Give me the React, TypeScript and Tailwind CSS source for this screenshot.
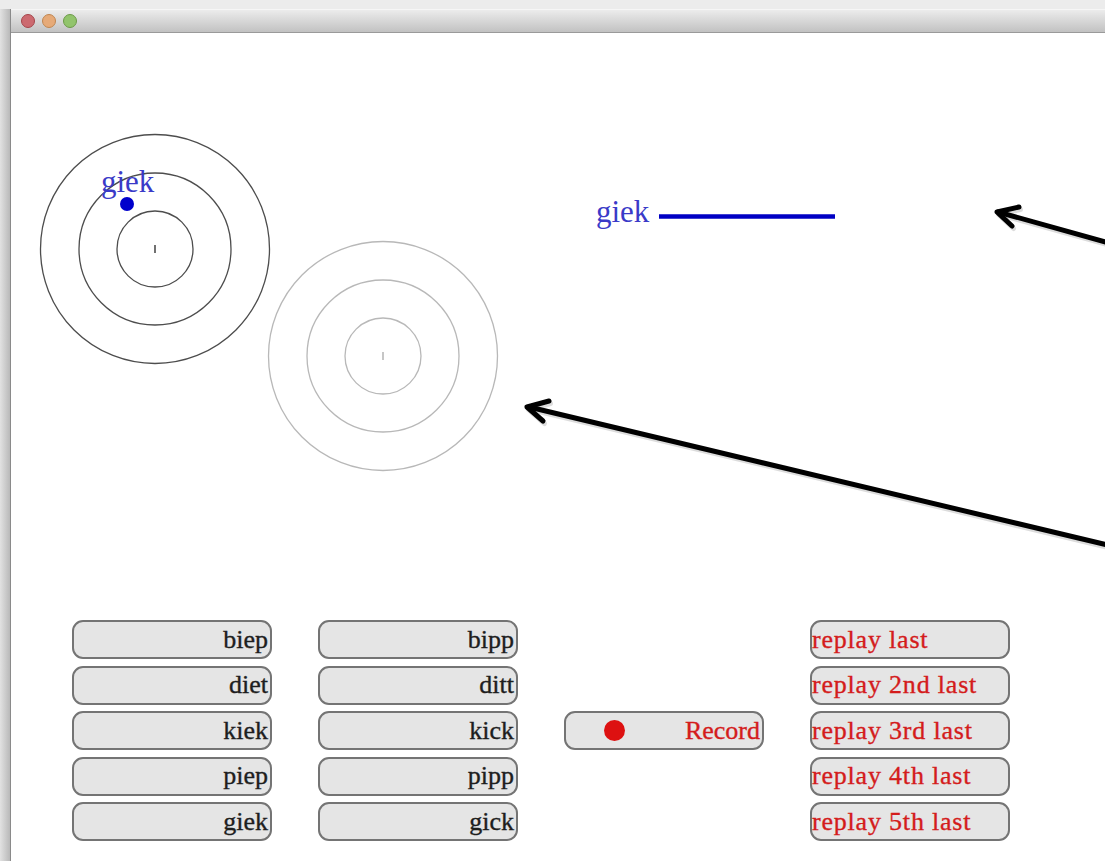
import React from "react";

const serif = { fontFamily: '"Liberation Serif", "Times New Roman", serif' };

function Btn({ children, align = "right", red = false }: { children: React.ReactNode; align?: "left" | "right"; red?: boolean }) {
  return (
    <div
      className={`h-[39px] rounded-[11px] border-2 border-[#747474] bg-[#e5e5e5] flex items-center text-[26px] leading-none [-webkit-text-stroke:0.35px_currentColor] ${
        align === "right" ? "justify-end pr-[2px]" : "justify-start pl-0 tracking-[0.8px]"
      } ${red ? "text-[#d41c1c]" : "text-[#1e1e1e]"}`}
      style={serif}
    >
      {children}
    </div>
  );
}

function Rings({ cx, cy, color }: { cx: number; cy: number; color: string }) {
  return (
    <g fill="none" stroke={color} strokeWidth={1.3}>
      <circle cx={cx} cy={cy} r={114.5} />
      <circle cx={cx} cy={cy} r={76} />
      <circle cx={cx} cy={cy} r={38} />
      <line x1={cx} y1={cy - 4} x2={cx} y2={cy + 4} strokeWidth={1.6} />
    </g>
  );
}

export default function App() {
  const col1 = ["biep", "diet", "kiek", "piep", "giek"];
  const col2 = ["bipp", "ditt", "kick", "pipp", "gick"];
  const col4 = ["replay last", "replay 2nd last", "replay 3rd last", "replay 4th last", "replay 5th last"];

  return (
    <div className="relative w-[1105px] h-[861px] overflow-hidden bg-[#ececec] flex flex-col">
      <div className="h-[9px] bg-[#ececec] shrink-0" />
      <div className="flex flex-1">
        <div className="w-[10px] shrink-0 bg-gradient-to-r from-[#e2e2e2] to-[#b9b9b9]" />
        <div className="flex-1 flex flex-col border-l border-[#8a8a8a]">
          {/* title bar */}
          <div className="h-[24px] shrink-0 bg-gradient-to-b from-[#ececec] to-[#c2c2c2] border-b border-[#9a9a9a] border-t border-t-[#f6f6f6] flex items-center pl-[10px] gap-[7px]">
            <div className="w-[14px] h-[14px] rounded-full bg-[#cc6a70] border border-[#a5454a]" />
            <div className="w-[14px] h-[14px] rounded-full bg-[#e6aa78] border border-[#c08650]" />
            <div className="w-[14px] h-[14px] rounded-full bg-[#92c46c] border border-[#6c9a48]" />
          </div>
          {/* content */}
          <div className="flex-1 bg-white flex flex-col">
            <svg width={1094} height={587} className="block shrink-0">
              <Rings cx={144} cy={216} color="#4d4d4d" />
              <Rings cx={372} cy={323} color="#b8b8b8" />
              <circle cx={116} cy={171} r={7} fill="#0000cc" />
              <text x={90} y={159} fontSize={31} fill="#3a3ac8" style={serif}>
                giek
              </text>
              <text x={585} y={189} fontSize={31} fill="#3a3ac8" style={serif}>
                giek
              </text>
              <line x1={648} y1={183.5} x2={824} y2={183.5} stroke="#0000c4" strokeWidth={4.5} />
            </svg>
            <div className="grid grid-cols-[200px_200px_200px_200px] gap-x-[46px] gap-y-[6.5px] pl-[61px]">
              {col1.map((w, i) => (
                <React.Fragment key={w}>
                  <Btn>{w}</Btn>
                  <Btn>{col2[i]}</Btn>
                  {i === 2 ? (
                    <Btn red>
                      <span className="flex-1 flex justify-start pl-[38px]">
                        <span className="w-[21px] h-[21px] rounded-full bg-[#dd1111] inline-block" />
                      </span>
                      <span>Record</span>
                    </Btn>
                  ) : (
                    <div />
                  )}
                  <Btn align="left" red>
                    {col4[i]}
                  </Btn>
                </React.Fragment>
              ))}
            </div>
          </div>
        </div>
      </div>
      {/* annotation arrows */}
      <svg className="absolute inset-0 pointer-events-none" width={1105} height={861}>
        <g stroke="#9a9a9a" strokeOpacity={0.35} strokeWidth={5} strokeLinecap="round" fill="none" transform="translate(1.5,2.5)">
          <line x1={1120} y1={246} x2={998} y2={212} />
          <polyline points="1019,207 997,212 1012,226" strokeLinejoin="round" />
          <line x1={1120} y1={548} x2={529} y2={407} />
          <polyline points="549,401 527,407 543,421" strokeLinejoin="round" />
        </g>
        <g stroke="#000" strokeWidth={5} strokeLinecap="round" fill="none">
          <line x1={1120} y1={246} x2={998} y2={212} />
          <polyline points="1019,207 997,212 1012,226" strokeLinejoin="round" />
          <line x1={1120} y1={548} x2={529} y2={407} />
          <polyline points="549,401 527,407 543,421" strokeLinejoin="round" />
        </g>
      </svg>
    </div>
  );
}
